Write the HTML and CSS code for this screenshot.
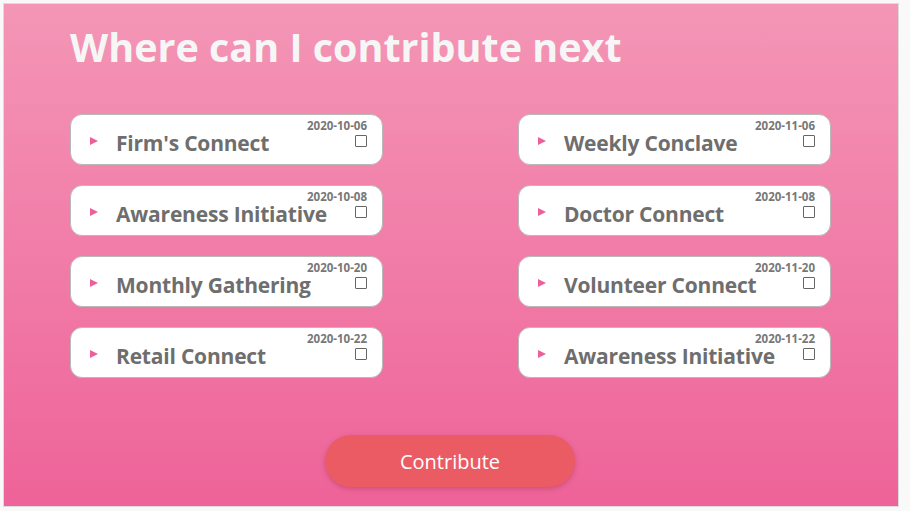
FILE: index.html
```html
<!DOCTYPE html>
<html>
<head>
<meta charset="utf-8">
<link rel="stylesheet" href="styles.css">
</head>
<body>
<div class="panel">
  <h1 class="title">Where can I contribute next</h1>
  <div class="grid">
    <div class="card"><span class="tri"></span><span class="name">Firm's Connect</span><div class="meta"><span class="date">2020-10-06</span><span class="box"></span></div></div>
    <div class="card"><span class="tri"></span><span class="name">Weekly Conclave</span><div class="meta"><span class="date">2020-11-06</span><span class="box"></span></div></div>
    <div class="card"><span class="tri"></span><span class="name">Awareness Initiative</span><div class="meta"><span class="date">2020-10-08</span><span class="box"></span></div></div>
    <div class="card"><span class="tri"></span><span class="name">Doctor Connect</span><div class="meta"><span class="date">2020-11-08</span><span class="box"></span></div></div>
    <div class="card"><span class="tri"></span><span class="name">Monthly Gathering</span><div class="meta"><span class="date">2020-10-20</span><span class="box"></span></div></div>
    <div class="card"><span class="tri"></span><span class="name">Volunteer Connect</span><div class="meta"><span class="date">2020-11-20</span><span class="box"></span></div></div>
    <div class="card"><span class="tri"></span><span class="name">Retail Connect</span><div class="meta"><span class="date">2020-10-22</span><span class="box"></span></div></div>
    <div class="card"><span class="tri"></span><span class="name">Awareness Initiative</span><div class="meta"><span class="date">2020-11-22</span><span class="box"></span></div></div>
  </div>
  <div class="actions"><button class="btn">Contribute</button></div>
</div>
</body>
</html>
```

FILE: styles.css
```css
html, body {
  margin: 0;
  padding: 0;
  background: #f9f9f9;
  font-family: "Open Sans", "Noto Sans", sans-serif;
}
.panel {
  margin: 3px;
  width: 896px;
  height: 504px;
  box-sizing: border-box;
  border: 1px solid #dcdcdc;
  background: linear-gradient(to bottom, #f496b6 0%, #ee6399 100%);
  padding: 0 0 0 66px;
  display: flex;
  flex-direction: column;
}
.title {
  margin: 17px 0 0 0;
  height: 52px;
  line-height: 52px;
  font-size: 39.5px;
  font-weight: 700;
  color: #f6f6f6;
  letter-spacing: 0;
  white-space: nowrap;
}
.grid {
  margin-top: 41px;
  display: grid;
  grid-template-columns: 313px 313px;
  grid-auto-rows: 51px;
  column-gap: 135px;
  row-gap: 20px;
}
.card {
  height: 51px;
  box-sizing: border-box;
  background: #fff;
  border: 1px solid #b9b9b9;
  border-radius: 12px;
  display: flex;
  align-items: center;
  padding: 0 15px 0 19px;
  position: relative;
}
.tri {
  width: 0;
  height: 0;
  border-top: 4.5px solid transparent;
  border-bottom: 4.5px solid transparent;
  border-left: 8px solid #ef5f97;
  margin-top: 2px;
  flex: none;
}
.name {
  margin-left: 18px;
  font-size: 21px;
  line-height: 22px;
  font-weight: 700;
  color: #6e6e6e;
  letter-spacing: -0.2px;
  margin-top: 6px;
  white-space: nowrap;
}
.meta {
  position: absolute;
  top: 4px;
  right: 15px;
  display: flex;
  flex-direction: column;
  align-items: flex-end;
}
.date {
  font-size: 11.5px;
  font-weight: 700;
  color: #777;
  line-height: 13px;
  white-space: nowrap;
}
.box {
  margin-top: 3px;
  width: 12px;
  height: 12px;
  box-sizing: border-box;
  border: 1.5px solid #666;
  border-radius: 1px;
  background: #fff;
}
.actions {
  margin-top: 57px;
  display: flex;
  justify-content: center;
  padding-right: 66px;
}
.btn {
  width: 250px;
  height: 52px;
  border: none;
  border-radius: 26px;
  background: #eb5b64;
  color: #fff;
  font-family: "Open Sans", "Noto Sans", sans-serif;
  font-size: 20px;
  box-shadow: 0 2px 5px rgba(150, 40, 70, 0.35);
  margin-left: -2px;
}
```
